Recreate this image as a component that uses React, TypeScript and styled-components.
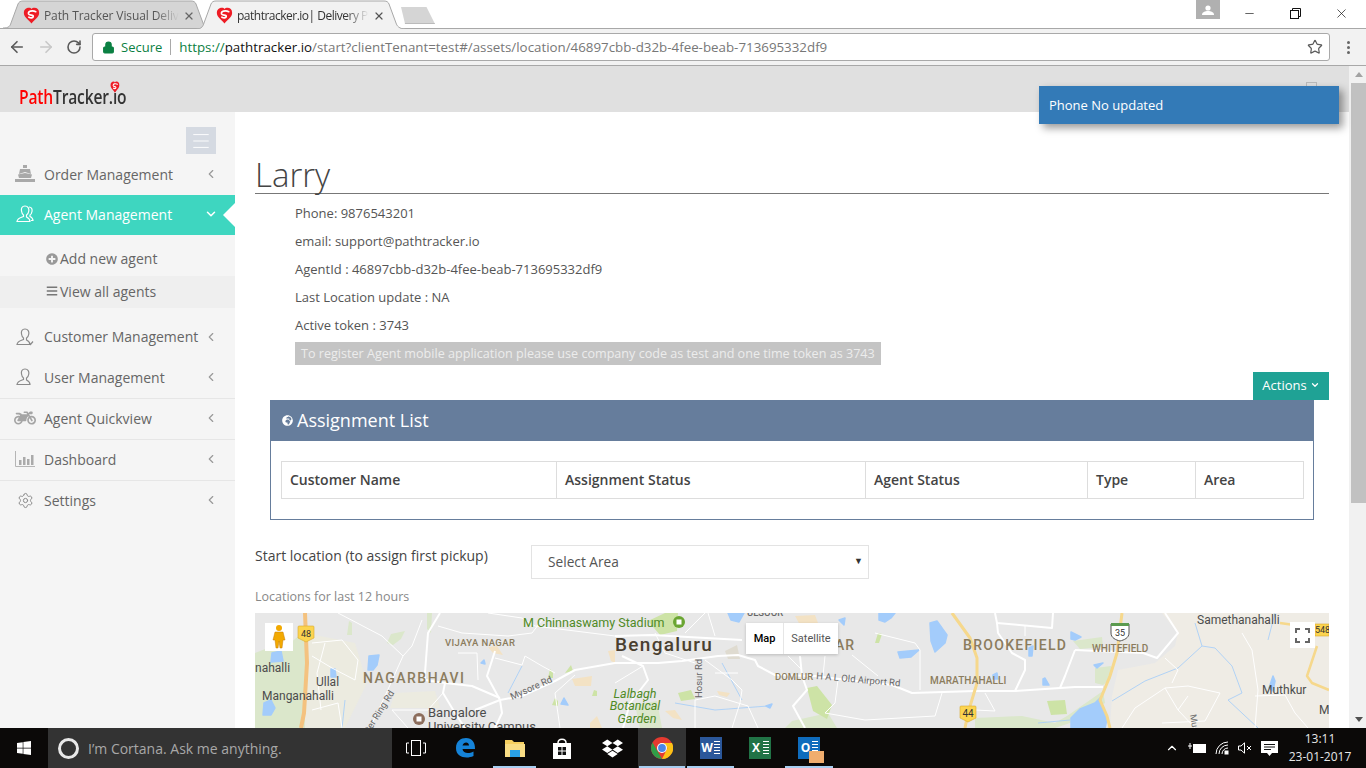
import React from 'react';
import styled, { createGlobalStyle } from 'styled-components';
import { ArrowLeft, ArrowRight, RotateCw, Star, ChevronLeft, ChevronDown, Settings, X, Lock, Menu, Minus } from 'lucide-react';
import { FaWindows, FaDropbox, FaMotorcycle, FaPlusCircle, FaBars, FaGlobeAfrica } from 'react-icons/fa';

const GlobalStyle = createGlobalStyle`
  html, body { margin: 0; padding: 0; overflow: hidden; }
  body { font-family: "Open Sans", "Liberation Sans", sans-serif; color: #555; }
  * { box-sizing: border-box; }
`;

const PathMark = ({ size = 18 }: { size?: number }) => (
  <svg width={size} height={size} viewBox="0 0 20 20">
    <path d="M10 19.5 C7 15 1 12 1 7 C1 3 4 1 7 1 C8.5 1 9.5 1.6 10 2.4 C10.5 1.6 12 1 13.5 1 C16.5 1 19 3 19 7 C19 12 13 15 10 19.5Z" fill="#ee1c25" />
    <path d="M15 5.5 C11 3.5 5.5 5 6.5 8 C7.5 10 13 9 12 11.5 C11.5 13 9 13 7 12" fill="none" stroke="#fff" strokeWidth="2" strokeLinecap="round" />
  </svg>
);

const TabShape = ({ fill, base }: { fill: string; base: number }) => (
  <svg width="210" height="29" viewBox="0 0 210 29">
    <path d={`M0 ${base} C6 ${base} 7 26 8 23 L15 4 C16 2 17 1 20 1 L188 1 C191 1 192 2 193 4 L200 23 C201 26 203 ${base} 210 ${base}`} fill={fill} stroke="#a8a8a8" />
  </svg>
);

const BrowserTabs = () => (
  <TabStrip>
    <Tab>
      <TabBack><TabShape fill="#d5d5d5" base={28} /></TabBack>
      <PathMark size={17} />
      <TabTitle>Path Tracker Visual Delivery</TabTitle>
      <X size={12} strokeWidth={2.4} color="#666" />
    </Tab>
    <Tab $active>
      <TabBack><TabShape fill="#f2f2f2" base={29} /></TabBack>
      <PathMark size={17} />
      <TabTitle $active>pathtracker.io| Delivery Platform</TabTitle>
      <X size={12} strokeWidth={2.4} color="#555" />
    </Tab>
    <NewTab />
    <WindowControls>
      <ProfileBox>
        <svg width="12" height="10" viewBox="0 0 12 10">
          <circle cx="6" cy="3" r="2.6" fill="#fff" />
          <path d="M0 10 C0 7 3 6 6 6 C9 6 12 7 12 10Z" fill="#fff" />
        </svg>
      </ProfileBox>
      <WindowButton><Minus size={13} strokeWidth={1.2} color="#111" /></WindowButton>
      <WindowButton>
        <svg width="11" height="11" viewBox="0 0 11 11" fill="none" stroke="#111">
          <rect x="0.5" y="2.5" width="8" height="8" />
          <path d="M2.5 2.5 V0.5 H10.5 V8.5 H8.5" />
        </svg>
      </WindowButton>
      <WindowButton><X size={15} strokeWidth={1.1} color="#111" /></WindowButton>
    </WindowControls>
  </TabStrip>
);

const BrowserToolbar = () => (
  <Toolbar>
    <NavButtons>
      <ArrowLeft size={18} color="#5a5a5a" strokeWidth={2.2} />
      <ArrowRight size={18} color="#c8c8c8" strokeWidth={2.2} />
      <RotateCw size={16} color="#5a5a5a" strokeWidth={2.4} />
    </NavButtons>
    <Omnibox>
      <Lock size={13} color="#0b8043" fill="#0b8043" strokeWidth={2} />
      <SecureLabel>Secure</SecureLabel>
      <OmniDivider />
      <UrlText>
        <span>https://</span><b>pathtracker.io</b>/start?clientTenant=test#/assets/location/46897cbb-d32b-4fee-beab-713695332df9
      </UrlText>
      <StarSlot><Star size={16} color="#5a5a5a" strokeWidth={1.8} /></StarSlot>
    </Omnibox>
    <MenuDots><i /><i /><i /></MenuDots>
  </Toolbar>
);

const ShipIcon = () => (
  <svg width="20" height="18" viewBox="0 0 20 18" fill="#a9a9a9">
    <rect x="8" y="0" width="4" height="3" />
    <path d="M5 4 H15 L16 9 L10 7 L4 9Z" />
    <path d="M3 9.5 L10 8 L17 9.5 L16 13 H4Z" />
    <rect x="0" y="14" width="20" height="3" />
  </svg>
);

const PersonIcon = ({ color, double, check }: { color: string; double?: boolean; check?: boolean }) => (
  <svg width="18" height="18" viewBox="0 0 18 18" fill="none" stroke={color} strokeWidth="1.2">
    <path d="M9 1 C6 1 5 3.5 5.5 6 C5.8 8 6.5 9.5 7.5 10 V11.5 C5 12.5 1.5 13 1 16.5 H14 C14 14.5 12.5 13 10.5 12 V10 C11.5 9.5 12.5 8 12.8 6 C13.2 3.5 12 1 9 1Z" />
    {double && <path d="M13 2 C15.5 2 16.5 4 16 6.5 C15.7 8 15 9.5 14 10 V11.5 C15.5 12.2 17 13.5 17 15.5 H15" />}
    {check && <path d="M13 14.5 L14.5 16.5 L17 13.5" />}
  </svg>
);

const BarsIcon = () => (
  <svg width="20" height="16" viewBox="0 0 20 16">
    <path d="M0.5 0 V15.5 H20" fill="none" stroke="#b5b5b5" />
    <g fill="#aaa">
      <rect x="4" y="9" width="2.5" height="5" />
      <rect x="8" y="6" width="2.5" height="8" />
      <rect x="12" y="8" width="2.5" height="6" />
      <rect x="16" y="4" width="2.5" height="10" />
    </g>
  </svg>
);

const Sidebar = () => (
  <Side>
    <SideToggle><Menu size={22} color="#fff" strokeWidth={1} /></SideToggle>
    <NavItem>
      <NavIcon><ShipIcon /></NavIcon>
      <NavLabel>Order Management</NavLabel>
      <NavArrow><ChevronLeft size={14} color="#999" /></NavArrow>
    </NavItem>
    <NavItem $active>
      <NavIcon><PersonIcon color="#fff" double /></NavIcon>
      <NavLabel>Agent Management</NavLabel>
      <NavArrow><ChevronDown size={14} color="#fff" strokeWidth={2.6} /></NavArrow>
      <ActiveNotch />
    </NavItem>
    <SubMenu>
      <SubItem><FaPlusCircle size={12} color="#999" />Add new agent</SubItem>
      <SubItem $current><FaBars size={12} color="#777" />View all agents</SubItem>
    </SubMenu>
    <NavItem $tall>
      <NavIcon><PersonIcon color="#8a8a8a" check /></NavIcon>
      <NavLabel>Customer Management</NavLabel>
      <NavArrow><ChevronLeft size={14} color="#999" /></NavArrow>
    </NavItem>
    <NavItem $divider>
      <NavIcon><PersonIcon color="#8a8a8a" /></NavIcon>
      <NavLabel>User Management</NavLabel>
      <NavArrow><ChevronLeft size={14} color="#999" /></NavArrow>
    </NavItem>
    <NavItem $divider>
      <NavIcon><FaMotorcycle size={22} color="#a5a5a5" /></NavIcon>
      <NavLabel>Agent Quickview</NavLabel>
      <NavArrow><ChevronLeft size={14} color="#999" /></NavArrow>
    </NavItem>
    <NavItem $divider>
      <NavIcon><BarsIcon /></NavIcon>
      <NavLabel>Dashboard</NavLabel>
      <NavArrow><ChevronLeft size={14} color="#999" /></NavArrow>
    </NavItem>
    <NavItem>
      <NavIcon><Settings size={17} color="#8a8a8a" strokeWidth={1.4} /></NavIcon>
      <NavLabel>Settings</NavLabel>
      <NavArrow><ChevronLeft size={14} color="#999" /></NavArrow>
    </NavItem>
  </Side>
);

const paleGreen = [
  'M0 40 L18 33 L35 30 L45 22 L50 30 L50 115 L0 115Z',
  'M132 30 L136 21 L150 18 L146 26 L138 32Z',
  'M92 22 L94 8 L97 10 L97 22Z',
  'M172 0 H177 L176 20 L172 16Z',
  'M818 28 L847 24 L848 34 L825 36Z',
  'M840 55 L856 53 L856 66 L848 72 L840 70Z',
  'M720 105 L767 103 L800 110 L812 103 L848 78 L850 90 L815 110 L800 115 H720Z',
  'M537 108 L573 100 L582 115 H530Z',
  'M380 92 L402 88 L407 115 H385Z',
];

const brightGreen = [
  'M393 8 L410 0 L423 0 L422 18 L405 22Z',
  'M423 80 L436 77 L440 86 L426 88Z',
  'M552 75 L562 73 L577 92 L572 106 L558 98Z',
  'M792 88 L810 87 L812 101 L796 102Z',
  'M620 30 L623 20 L627 21 L624 30Z',
  'M293 65 L295 56 L298 60 L298 65Z',
  'M310 60 L316 52 L318 58Z',
  'M297 92 L300 85 L303 88 L303 93Z',
  'M337 83 L339 77 L342 78 L342 83Z',
];

const water = [
  'M114 43 L124 42 L122 52 L118 57 L113 57Z',
  'M17 40 L26 38 L28 48 L16 49Z',
  'M9 90 L16 87 L20 95 L16 102 L8 102Z',
  'M76 56 L80 56 L81 64 L76 64Z',
  'M473 0 H489 L484 9 L476 7Z',
  'M624 0 H640 L636 5 L630 9 L624 7Z',
  'M675 10 L682 8 L692 22 L690 30 L680 39 L676 28Z',
  'M643 39 L664 37 L656 44 L645 45Z',
  'M584 7 L590 5 L589 12Z',
  'M511 93 L517 91 L515 95Z',
  'M306 91 L309 85 L313 92Z',
  'M816 19 L826 24 L820 27 L816 26Z',
  'M774 35 L778 33 L777 43 L774 43Z',
  'M788 66 L790 65 L794 72 L788 72Z',
  'M839 52 L848 50 L842 55Z',
  'M816 105 L825 96 L840 90 L845 85 L852 106 L850 115 H816Z',
  'M1014 75 L1018 63 L1020 68 L1018 78Z',
  'M738 62 L742 60 L743 66 L738 66Z',
  'M226 50 L229 47 L230 51Z',
];

const tan = [
  'M317 66 L337 63 L336 73 L320 73Z',
  'M335 110 L342 103 L347 115 H335Z',
  'M233 34 L242 33 L248 42 L238 40Z',
  'M353 38 L360 37 V50 L356 48Z',
  'M462 78 L475 80 L472 84 L464 82Z',
  'M410 98 L420 97 L427 107 L418 105Z',
  'M540 3 L560 2 L563 10 L545 12Z',
];

const roads = [
  'M220 97 L245 87 L267 83 L300 68 L320 57 L360 50 L403 50 L427 48 L463 43 L483 42 L500 47 L503 53 L520 62 L560 63 L593 67 L637 72 L657 80 L720 78 L760 78 L820 74 L848 74',
  'M185 0 L173 20 L170 60 L170 67 L190 70 L217 73 L245 85',
  'M240 38 L232 63 L245 87 L247 100 L240 115',
  'M190 70 L188 80 L200 100 L210 115',
  'M545 43 L547 63 L552 77 L538 93 L550 115',
  'M360 23 L397 22 L487 27',
  'M367 43 L388 53 L393 67 L375 90 L368 115',
  'M740 0 L742 10 L797 15 L798 0',
  'M742 10 L743 20 L757 40 L770 47 L770 57 L760 78',
  'M820 37 L888 40 L902 45 L923 20 L910 0',
  'M820 37 L810 63 L805 75',
];

const thinRoads = [
  'M83 0 L127 23 L148 43',
  'M167 7 L157 33 L148 43 L130 83 L115 115',
  'M137 97 L173 97 L188 80',
  'M137 97 L153 115',
  'M183 13 L207 20 L253 23 L277 20 L287 7 L333 8',
  'M233 0 L267 5 L280 13 L360 23',
  'M203 40 L222 40 L223 67',
  'M240 45 L267 52 L270 43 L287 53 L300 60',
  'M57 30 L87 27 L103 47 L100 67 L77 55 L57 43',
  'M57 97 L83 90 L87 115',
  'M70 30 L62 60 L66 97',
  'M388 53 L360 70',
  'M450 47 L477 67 L487 77 L485 90 L477 115',
  'M440 87 L440 115',
  'M460 60 L483 60',
  'M440 87 L460 83 L493 93 L503 115',
  'M430 20 L450 0',
  'M453 0 L460 23',
  'M533 43 L547 57',
  'M570 43 L568 63',
  'M597 42 L623 63',
  'M620 20 L660 30 L665 37 L665 77',
  'M583 67 L580 90 L570 100 L610 107 L680 103 L687 80',
  'M770 13 L770 23',
  'M720 97 L740 98 L730 80',
  'M867 115 L880 95 L910 75 L933 73 L965 80 L950 108 L907 110',
  'M910 75 L923 97 L933 83',
  'M923 97 L940 115',
  'M1000 83 L1030 82 L1040 100 L1053 115',
  'M987 20 L997 37 L1003 77 L1000 115',
  'M923 57 L917 70',
  'M910 45 L923 57',
  'M305 115 L300 80 L320 62',
  'M400 20 L410 40 L440 50',
];

const rivers = [
  'M857 88 L890 68 L923 55 L947 33 L960 35 L977 53 L987 80 L973 87 L1003 115',
  'M940 10 L947 33',
  'M1020 0 L1013 27',
  'M467 50 L487 87',
  'M420 90 L460 97 L513 93',
  'M783 110 L815 107',
  'M90 87 L87 115',
  'M267 53 L253 80',
];

const MapDrawing = () => (
  <MapSvg viewBox="0 0 1074 115">
    <defs>
      <filter id="mapSoft"><feGaussianBlur stdDeviation="0.35" /></filter>
    </defs>
    <g filter="url(#mapSoft)">
      <rect width="1074" height="115" fill="#e8e8e8" />
      <path d="M907 0 L923 20 L920 33 L900 50 L863 57 L857 83 L855 115 H1074 V0Z" fill="#efece5" />
      <path d="M50 20 L100 30 L112 70 L90 115 H50Z" fill="#ecebe0" />
      <path d="M470 38 L482 32 L485 46 L473 46Z" fill="#dfdbd0" />
      <path d="M140 80 L180 78 L185 95 L135 95Z" fill="#ecebe0" />
      <g fill="#dbe7cb">{paleGreen.map(d => <path key={d} d={d} />)}</g>
      <g fill="#cde3a6">{brightGreen.map(d => <path key={d} d={d} />)}</g>
      <g fill="#f3e2c4">{tan.map(d => <path key={d} d={d} />)}</g>
      <g fill="#a3ccfb" stroke="#a3ccfb" strokeWidth="1.5" strokeLinejoin="round">{water.map(d => <path key={d} d={d} />)}</g>
      <g fill="none" stroke="#a9cff7" strokeWidth="0.9">{rivers.map(d => <path key={d} d={d} />)}</g>
      <g fill="none" stroke="#fff" strokeWidth="1" strokeLinejoin="round">{thinRoads.map(d => <path key={d} d={d} />)}</g>
      <g fill="none" stroke="#fff" strokeWidth="2" strokeLinejoin="round">{roads.map(d => <path key={d} d={d} />)}</g>
      <g fill="none" strokeLinejoin="round">
        <path d="M50 0 L52 50 L49 100 L46 115" stroke="#f4c27f" strokeWidth="4" />
        <path d="M697 0 L715 25 L722 45 L722 70 L716 90 L713 100 L710 115" stroke="#f6d88c" strokeWidth="3" />
        <path d="M867 0 L862 40 L855 63 L848 80 L845 87 L852 103 L855 115" stroke="#f6d88c" strokeWidth="3" />
        <path d="M1025 10 L1060 15 L1074 15" stroke="#f6d88c" strokeWidth="2.5" />
        <path d="M1062 33 L1052 63 L1057 70 L1074 77" stroke="#f6d88c" strokeWidth="2.5" />
      </g>
    </g>
    <g fill="#fcd44f" stroke="#d9a92e" strokeWidth="0.6">
      <path d="M44 13 H58 Q59 13 59 14 V25 L51 29 L43 25 V14 Q43 13 44 13Z" />
      <path d="M706 93 H720 Q721 93 721 94 V105 L713 109 L705 105 V94 Q705 93 706 93Z" />
      <path d="M1060 11 H1074 V23 H1060Z" />
    </g>
    <path d="M856 11 H874 V20 C874 25 869 27 865 28 C861 27 856 25 856 20Z" fill="#fff" stroke="#555" />
    <rect x="856" y="10" width="18" height="3" fill="#5b9a4f" />
    <circle cx="424" cy="9" r="6" fill="#6aa532" />
    <rect x="421.5" y="6.5" width="5" height="5" fill="#fff" />
    <circle cx="164" cy="106" r="6" fill="#8c6d5c" />
    <rect x="161.5" y="103.5" width="5" height="5" fill="#fff" />
    <MapText x="51" y="24" $size={9} $color="#333" textAnchor="middle">48</MapText>
    <MapText x="713" y="104" $size={10} $color="#333" textAnchor="middle">44</MapText>
    <MapText x="865" y="23" $size={9} $color="#333" textAnchor="middle">35</MapText>
    <MapText x="1060" y="20" $size={9} $color="#333">548</MapText>
    <MapText x="268" y="14" $size={12.5} $color="#4f8a26">M Chinnaswamy Stadium</MapText>
    <MapText x="360" y="38" $size={19} $weight={500} $spacing={1.3} $color="#4a3f30">Bengaluru</MapText>
    <MapText x="190" y="33" $size={9.5} $weight={500} $spacing={0.4} $color="#8b7c5d">VIJAYA NAGAR</MapText>
    <MapText x="108" y="70" $size={14} $weight={500} $spacing={1.5} $color="#8b7c5d">NAGARBHAVI</MapText>
    <MapText x="0" y="59" $size={12} $color="#4c4c4c">nahalli</MapText>
    <MapText x="61" y="73" $size={12} $color="#4c4c4c">Ullal</MapText>
    <MapText x="7" y="87" $size={12} $color="#4c4c4c">Manganahalli</MapText>
    <MapText x="173" y="104" $size={13} $color="#4c4c4c">Bangalore</MapText>
    <MapText x="173" y="118" $size={13} $color="#4c4c4c">University Campus</MapText>
    <MapText x="257" y="87" $size={9.5} $color="#666" transform="rotate(-24 257 87)">Mysore Rd</MapText>
    <MapText x="109" y="129" $size={9.5} $color="#666" transform="rotate(-58 109 129)">Outer Ring Rd</MapText>
    <MapText x="447" y="85" $size={9.5} $color="#666" transform="rotate(-90 447 85)">Hosur Rd</MapText>
    <MapText x="380" y="85" $size={12.5} $italic $color="#4f8a26" textAnchor="middle">Lalbagh</MapText>
    <MapText x="380" y="97" $size={12.5} $italic $color="#4f8a26" textAnchor="middle">Botanical</MapText>
    <MapText x="382" y="110" $size={12.5} $italic $color="#4f8a26" textAnchor="middle">Garden</MapText>
    <MapText x="520" y="67" $size={9.5} $weight={500} $color="#8b7c5d">DOMLUR</MapText>
    <MapText x="561" y="66" $size={9.5} $color="#666" transform="rotate(5 561 66)">H A L Old Airport Rd</MapText>
    <MapText x="675" y="71" $size={10} $weight={500} $spacing={0.1} $color="#8b7c5d">MARATHAHALLI</MapText>
    <MapText x="708" y="37" $size={14} $weight={500} $spacing={1.3} $color="#8b7c5d">BROOKEFIELD</MapText>
    <MapText x="837" y="39" $size={10} $weight={500} $color="#8b7c5d">WHITEFIELD</MapText>
    <MapText x="942" y="11" $size={12} $color="#4c4c4c">Samethanahalli</MapText>
    <MapText x="1007" y="81" $size={12} $color="#4c4c4c">Muthkur</MapText>
    <MapText x="1064" y="101" $size={12} $color="#4c4c4c">M</MapText>
    <MapText x="580" y="37" $size={14} $weight={500} $spacing={1} $color="#8b7c5d">AR</MapText>
    <MapText x="492" y="3" $size={9.5} $weight={500} $color="#666">ULSOOR</MapText>
    <MapText x="935" y="102" $size={9} $color="#666" transform="rotate(80 935 102)">Mu</MapText>
  </MapSvg>
);

const Pegman = () => (
  <svg width="14" height="24" viewBox="0 0 14 24">
    <circle cx="7" cy="3" r="3" fill="#f2a900" />
    <path d="M3 7 H11 L13 15 H11 L10 23 H8 L7 16 L6 23 H4 L3 15 H1Z" fill="#f2a900" stroke="#c97d00" strokeWidth="0.5" />
  </svg>
);

const FullscreenIcon = () => (
  <svg width="15" height="15" viewBox="0 0 15 15" fill="none" stroke="#666" strokeWidth="2">
    <path d="M1 5 V1 H5 M10 1 H14 V5 M14 10 V14 H10 M5 14 H1 V10" />
  </svg>
);

const MainContent = () => (
  <Main>
    <PageTitle>Larry</PageTitle>
    <Details>
      <DetailRow>Phone: 9876543201</DetailRow>
      <DetailRow>email: support@pathtracker.io</DetailRow>
      <DetailRow>AgentId : 46897cbb-d32b-4fee-beab-713695332df9</DetailRow>
      <DetailRow>Last Location update : NA</DetailRow>
      <DetailRow>Active token : 3743</DetailRow>
      <Note>To register Agent mobile application please use company code as test and one time token as 3743</Note>
    </Details>
    <ActionsRow>
      <ActionsButton>Actions<ChevronDown size={10} strokeWidth={3} /></ActionsButton>
    </ActionsRow>
    <Panel>
      <PanelHead><FaGlobeAfrica size={11} color="#fff" />Assignment List</PanelHead>
      <PanelBody>
        <AssignTable>
          <thead>
            <tr>
              <HeadCell $w={275}>Customer Name</HeadCell>
              <HeadCell $w={309}>Assignment Status</HeadCell>
              <HeadCell $w={222}>Agent Status</HeadCell>
              <HeadCell $w={108}>Type</HeadCell>
              <HeadCell $w={108}>Area</HeadCell>
            </tr>
          </thead>
        </AssignTable>
      </PanelBody>
    </Panel>
    <StartRow>
      <StartLabel>Start location (to assign first pickup)</StartLabel>
      <SelectBox>Select Area<SelectArrow>▼</SelectArrow></SelectBox>
    </StartRow>
    <Caption>Locations for last 12 hours</Caption>
    <MapFrame>
      <MapDrawing />
      <PegmanBox><Pegman /></PegmanBox>
      <MapTypes>
        <MapType $active>Map</MapType>
        <MapType>Satellite</MapType>
      </MapTypes>
      <FullscreenBox><FullscreenIcon /></FullscreenBox>
    </MapFrame>
  </Main>
);

const EdgeIcon = () => (
  <svg width="21" height="22" viewBox="0 0 21 22">
    <path d="M1 11 C1 4 6 1 11 1 C17 1 20 5 20 12 H7.5 C8 16 13 17.5 18.5 14.5 V19 C12 22 1 21 1 11Z M7.5 8.5 H14 C14 4.5 8.5 4.5 7.5 8.5Z" fill="#1583d8" fillRule="evenodd" />
  </svg>
);

const FolderIcon = () => (
  <svg width="22" height="20" viewBox="0 0 22 20">
    <path d="M1 2 H8 L10 4 H20 V19 H1Z" fill="#f6cf5f" />
    <rect x="1" y="6" width="20" height="13" fill="#f9dd84" />
    <rect x="6" y="12" width="10" height="7" fill="#2aa2e8" />
  </svg>
);

const StoreIcon = () => (
  <svg width="20" height="23" viewBox="0 0 20 23">
    <path d="M6 6 C6 1 14 1 14 6" fill="none" stroke="#fff" strokeWidth="1.5" />
    <path d="M1 6 H19 V22 H1Z" fill="#fff" />
    <g fill="#111">
      <rect x="6" y="10" width="3.5" height="3.5" />
      <rect x="10.5" y="10" width="3.5" height="3.5" />
      <rect x="6" y="14.5" width="3.5" height="3.5" />
      <rect x="10.5" y="14.5" width="3.5" height="3.5" />
    </g>
  </svg>
);

const ChromeIcon = () => (
  <svg width="22" height="22" viewBox="0 0 22 22">
    <circle cx="11" cy="11" r="11" fill="#e53a30" />
    <path d="M1.5 5.5 L7 15 L11 22 A11 11 0 0 1 1.5 5.5Z" fill="#2f9e48" />
    <path d="M11 22 L16.5 11 L11 6 H21 A11 11 0 0 1 11 22Z" fill="#fbc116" />
    <circle cx="11" cy="11" r="5" fill="#fff" />
    <circle cx="11" cy="11" r="3.9" fill="#4a86e8" />
  </svg>
);

const TaskView = () => (
  <svg width="20" height="16" viewBox="0 0 20 16" fill="none" stroke="#fff">
    <rect x="5.5" y="0.5" width="9" height="15" />
    <path d="M3 3 H0.5 V13 H3 M17 3 H19.5 V13 H17" />
  </svg>
);

const ActionCenter = () => (
  <svg width="17" height="17" viewBox="0 0 17 17">
    <path d="M0 1 H17 V13 H11 L8.5 16 L6 13 H0Z" fill="#fff" />
    <path d="M3 4.5 H14 M3 7 H14 M3 9.5 H10" stroke="#111" />
  </svg>
);

const Taskbar = () => (
  <Bar>
    <StartButton><FaWindows size={16} color="#fff" /></StartButton>
    <Cortana>
      <CortanaRing />
      I’m Cortana. Ask me anything.
    </Cortana>
    <TaskSlot $w={47}><TaskView /></TaskSlot>
    <TaskSlot $w={53}><EdgeIcon /></TaskSlot>
    <TaskSlot $w={45} $open><FolderIcon /></TaskSlot>
    <TaskSlot $w={49}><StoreIcon /></TaskSlot>
    <TaskSlot $w={52}><FaDropbox size={21} color="#fff" /></TaskSlot>
    <TaskSlot $w={48} $open $current><ChromeIcon /></TaskSlot>
    <TaskSlot $w={49} $open><OfficeTile $bg="#2b579a">W</OfficeTile></TaskSlot>
    <TaskSlot $w={49}><OfficeTile $bg="#217346">X</OfficeTile></TaskSlot>
    <TaskSlot $w={50} $open><OfficeTile $bg="#0f6cbd">O<MailFlap /></OfficeTile></TaskSlot>
    <Tray>
      <ChevronDown size={14} color="#fff" style={{ transform: 'rotate(180deg)' }} />
      <svg width="18" height="12" viewBox="0 0 18 12" fill="none" stroke="#fff">
        <rect x="5.5" y="2.5" width="12" height="8" fill="#fff" />
        <path d="M0 4 H4 M2 1 V7" />
      </svg>
      <svg width="14" height="14" viewBox="0 0 14 14" fill="none" stroke="#fff">
        <path d="M1 13 A12 12 0 0 1 13 1 M4 13 A9 9 0 0 1 13 4 M7 13 A6 6 0 0 1 13 7" />
        <rect x="10" y="10" width="3" height="3" fill="#fff" />
      </svg>
      <svg width="14" height="12" viewBox="0 0 14 12" fill="none" stroke="#fff">
        <path d="M0.5 4 H3 L6.5 0.8 V11.2 L3 8 H0.5Z" />
        <path d="M9 4 L13 8 M13 4 L9 8" />
      </svg>
      <ActionCenter />
      <Clock>13:11<br />23-01-2017</Clock>
    </Tray>
  </Bar>
);

const App = () => (
  <>
    <GlobalStyle />
    <Screen>
      <BrowserTabs />
      <BrowserToolbar />
      <PageArea>
        <PageColumn>
          <TopBar>
            <Logo>
              <PathWord>Path</PathWord>Tracker.io
              <LogoMark><PathMark size={12} /></LogoMark>
            </Logo>
          </TopBar>
          <PageBody>
            <Sidebar />
            <MainContent />
          </PageBody>
        </PageColumn>
        <ScrollTrack>
          <ScrollArrow $up />
          <ScrollThumb />
          <ScrollArrow />
        </ScrollTrack>
        <GhostBox />
        <Toast>Phone No updated</Toast>
      </PageArea>
      <Taskbar />
    </Screen>
  </>
);

const Screen = styled.div`
  width: 1366px;
  height: 768px;
  display: flex;
  flex-direction: column;
  overflow: hidden;
  background: #fff;
`;

const TabStrip = styled.div`
  height: 28px;
  display: flex;
  align-items: flex-start;
  padding-left: 3px;
  background: #fff;
  flex: none;
  position: relative;
  z-index: 2;
`;

const Tab = styled.div<{ $active?: boolean }>`
  position: relative;
  width: 210px;
  height: 29px;
  margin-right: -17px;
  display: flex;
  align-items: center;
  padding: 2px ${p => (p.$active ? 21 : 18)}px 0 20px;
  gap: 4px;
  z-index: ${p => (p.$active ? 2 : 1)};
  & > svg { position: relative; flex: none; }
`;

const TabBack = styled.div`
  position: absolute;
  left: 0;
  top: 0;
  height: 29px;
  & > svg { display: block; }
`;

const TabTitle = styled.div<{ $active?: boolean }>`
  position: relative;
  flex: 1;
  min-width: 0;
  white-space: nowrap;
  overflow: hidden;
  font-size: 12px;
  letter-spacing: ${p => (p.$active ? -0.5 : -0.1)}px;
  color: ${p => (p.$active ? '#333' : '#555')};
  -webkit-mask-image: linear-gradient(90deg, #000 82%, transparent 100%);
  mask-image: linear-gradient(90deg, #000 82%, transparent 100%);
`;

const NewTab = styled.div`
  width: 34px;
  height: 17px;
  margin: 7px 0 0 12px;
  background: #d5d5d5;
  border-bottom: 1px solid #bbb;
  clip-path: polygon(0 0, 75% 0, 100% 100%, 12% 100%);
`;

const WindowControls = styled.div`
  margin-left: auto;
  display: flex;
  align-items: flex-start;
  padding-right: 2px;
`;

const ProfileBox = styled.div`
  width: 24px;
  height: 19px;
  background: #b0b0b0;
  display: flex;
  align-items: center;
  justify-content: center;
  margin-right: 6px;
`;

const WindowButton = styled.div`
  width: 46px;
  height: 27px;
  display: flex;
  align-items: center;
  justify-content: center;
`;

const Toolbar = styled.div`
  height: 38px;
  flex: none;
  display: flex;
  align-items: center;
  background: #f2f2f2;
  border-top: 1px solid #a8a8a8;
  border-bottom: 1px solid #a8a8a8;
  position: relative;
`;

const NavButtons = styled.div`
  width: 92px;
  display: flex;
  align-items: center;
  gap: 11px;
  padding-left: 8px;
`;

const Omnibox = styled.div`
  width: 1238px;
  height: 28px;
  background: #fff;
  border: 1px solid #a9a9a9;
  border-radius: 3px;
  display: flex;
  align-items: center;
  padding: 0 6px 0 9px;
`;

const SecureLabel = styled.span`
  margin-left: 6px;
  font-size: 13px;
  color: #0b8043;
`;

const OmniDivider = styled.span`
  width: 1px;
  height: 16px;
  margin: 0 8px;
  background: #a9a9a9;
`;

const UrlText = styled.div`
  font-size: 13.33px;
  color: #777;
  white-space: nowrap;
  span { color: #0b8043; }
  b { color: #111; font-weight: 400; }
`;

const StarSlot = styled.div`
  margin-left: auto;
  display: flex;
`;

const MenuDots = styled.div`
  flex: 1;
  display: flex;
  flex-direction: column;
  align-items: center;
  gap: 2px;
  i { width: 3px; height: 3px; border-radius: 50%; background: #666; }
`;

const PageArea = styled.div`
  flex: 1;
  min-height: 0;
  display: flex;
  position: relative;
`;

const PageColumn = styled.div`
  flex: 1;
  min-width: 0;
  display: flex;
  flex-direction: column;
`;

const TopBar = styled.div`
  height: 46px;
  flex: none;
  background: #e0e0e0;
  display: flex;
  align-items: flex-end;
  padding: 0 0 2px 19px;
`;

const Logo = styled.div`
  position: relative;
  font-size: 19px;
  font-weight: 600;
  line-height: 26px;
  color: #333;
  letter-spacing: -0.2px;
  transform: scaleX(0.82);
  transform-origin: left center;
`;

const PathWord = styled.span`
  color: #f00;
`;

const LogoMark = styled.span`
  position: absolute;
  right: 8px;
  top: -3px;
  display: flex;
`;

const PageBody = styled.div`
  flex: 1;
  min-height: 0;
  display: flex;
`;

const Side = styled.nav`
  width: 235px;
  flex: none;
  background: #f5f5f5;
`;

const SideToggle = styled.div`
  width: 30px;
  height: 27px;
  margin: 15px 0 1px 186px;
  background: #d5dae2;
  display: flex;
  align-items: center;
  justify-content: center;
`;

const NavItem = styled.div<{ $active?: boolean; $divider?: boolean; $tall?: boolean }>`
  position: relative;
  height: ${p => (p.$divider || p.$tall ? 41 : 40)}px;
  display: flex;
  align-items: center;
  padding: 0 17px 2px 14px;
  background: ${p => (p.$active ? '#3ed6c0' : 'transparent')};
  color: ${p => (p.$active ? '#fff' : '#666')};
  border-bottom: ${p => (p.$divider ? '1px solid #e6e6e6' : 'none')};
`;

const NavIcon = styled.div`
  width: 22px;
  height: 20px;
  margin-right: 8px;
  display: flex;
  align-items: center;
  justify-content: center;
`;

const NavLabel = styled.div`
  flex: 1;
  font-size: 14px;
  white-space: nowrap;
`;

const NavArrow = styled.div`
  width: 14px;
  display: flex;
`;

const ActiveNotch = styled.span`
  position: absolute;
  right: 0;
  top: 8px;
  border-top: 12px solid transparent;
  border-bottom: 12px solid transparent;
  border-right: 12px solid #fff;
`;

const SubMenu = styled.div`
  padding: 8px 0 9px;
`;

const SubItem = styled.div<{ $current?: boolean }>`
  height: ${p => (p.$current ? 32 : 33)}px;
  display: flex;
  align-items: center;
  gap: 2px;
  padding: 0 0 2px 46px;
  font-size: 14px;
  color: #666;
  background: ${p => (p.$current ? '#efefef' : 'transparent')};
`;

const Main = styled.main`
  flex: 1;
  min-width: 0;
  padding: 0 20px;
  background: #fff;
  overflow: hidden;
`;

const PageTitle = styled.h1`
  margin: 45px 0 0;
  height: 37px;
  line-height: 36px;
  font-size: 33px;
  font-weight: 300;
  color: #444;
  border-bottom: 1px solid #777;
`;

const Details = styled.div`
  padding: 5px 0 0 40px;
`;

const DetailRow = styled.div`
  height: 28px;
  line-height: 28px;
  font-size: 13px;
  color: #555;
`;

const Note = styled.div`
  display: inline-block;
  margin-top: 3px;
  height: 23px;
  line-height: 23px;
  padding: 0 6px;
  font-size: 12.6px;
  color: #ececec;
  background: #c4c4c4;
  vertical-align: top;
`;

const ActionsRow = styled.div`
  display: flex;
  justify-content: flex-end;
  margin-top: 7px;
`;

const ActionsButton = styled.div`
  width: 76px;
  height: 28px;
  display: flex;
  align-items: center;
  justify-content: center;
  gap: 3px;
  padding-bottom: 2px;
  background: #1fa295;
  color: #fff;
  font-size: 13px;
`;

const Panel = styled.section`
  margin: 0 15px;
  height: 120px;
  border: 1px solid #667d9c;
`;

const PanelHead = styled.div`
  height: 40px;
  display: flex;
  align-items: center;
  gap: 4px;
  padding: 0 0 2px 11px;
  background: #667d9c;
  color: #fff;
  font-size: 18px;
`;

const PanelBody = styled.div`
  padding: 20px 12px 20px 10px;
`;

const AssignTable = styled.table`
  width: 100%;
  border-collapse: collapse;
  table-layout: fixed;
`;

const HeadCell = styled.th<{ $w: number }>`
  width: ${p => p.$w}px;
  height: 37px;
  padding: 0 8px 1px;
  border: 1px solid #ddd;
  text-align: left;
  font-size: 14px;
  font-weight: 600;
  color: #444;
`;

const StartRow = styled.div`
  display: flex;
  align-items: flex-start;
  margin-top: 25px;
`;

const StartLabel = styled.div`
  width: 276px;
  line-height: 22px;
  font-size: 14px;
  color: #444;
`;

const SelectBox = styled.div`
  position: relative;
  width: 338px;
  height: 34px;
  line-height: 32px;
  padding-left: 16px;
  border: 1px solid #e3e3e3;
  font-size: 13.7px;
  color: #555;
`;

const SelectArrow = styled.span`
  position: absolute;
  right: 5px;
  top: -1px;
  font-size: 9px;
  color: #333;
`;

const Caption = styled.div`
  margin-top: 9px;
  height: 17px;
  line-height: 17px;
  font-size: 12.5px;
  color: #888;
`;

const MapFrame = styled.div`
  position: relative;
  margin-top: 8px;
  height: 115px;
  overflow: hidden;
`;

const MapSvg = styled.svg`
  display: block;
  width: 1074px;
  height: 115px;
`;

const MapText = styled.text<{ $size: number; $color: string; $weight?: number; $spacing?: number; $italic?: boolean }>`
  font-family: Roboto, "Liberation Sans", sans-serif;
  font-size: ${p => p.$size}px;
  font-weight: ${p => p.$weight ?? 400};
  font-style: ${p => (p.$italic ? 'italic' : 'normal')};
  letter-spacing: ${p => p.$spacing ?? 0}px;
  fill: ${p => p.$color};
`;

const PegmanBox = styled.div`
  position: absolute;
  left: 10px;
  top: 10px;
  width: 28px;
  height: 28px;
  background: #fff;
  display: flex;
  align-items: center;
  justify-content: center;
`;

const MapTypes = styled.div`
  position: absolute;
  left: 491px;
  top: 10px;
  height: 31px;
  display: flex;
  background: #fff;
  box-shadow: 0 1px 3px rgba(0, 0, 0, 0.2);
  font-family: Roboto, "Liberation Sans", sans-serif;
  font-size: 11px;
`;

const MapType = styled.div<{ $active?: boolean }>`
  width: ${p => (p.$active ? 38 : 54)}px;
  display: flex;
  align-items: center;
  justify-content: center;
  color: ${p => (p.$active ? '#000' : '#555')};
  font-weight: ${p => (p.$active ? 500 : 400)};
  border-right: ${p => (p.$active ? '1px solid #e6e6e6' : 'none')};
`;

const FullscreenBox = styled.div`
  position: absolute;
  left: 1035px;
  top: 9px;
  width: 25px;
  height: 26px;
  background: #fff;
  display: flex;
  align-items: center;
  justify-content: center;
`;

const ScrollTrack = styled.div`
  width: 17px;
  flex: none;
  background: #f1f1f1;
  padding-left: 2px;
  display: flex;
  flex-direction: column;
  align-items: center;
`;

const ScrollThumb = styled.div`
  width: 100%;
  height: 420px;
  background: #c1c1c1;
  flex: none;
  margin-bottom: auto;
`;

const ScrollArrow = styled.div<{ $up?: boolean }>`
  flex: none;
  width: 0;
  height: 5px;
  margin: 6px 0;
  border-left: 4px solid transparent;
  border-right: 4px solid transparent;
  ${p => (p.$up ? 'border-bottom: 5px solid #a3a3a3;' : 'border-top: 5px solid #505050;')}
`;

const GhostBox = styled.div`
  position: absolute;
  left: 1306px;
  top: 16px;
  width: 11px;
  height: 6px;
  border: 1px solid #bbb;
  border-bottom: 0;
`;

const Toast = styled.div`
  position: absolute;
  left: 1039px;
  top: 20px;
  width: 300px;
  height: 38px;
  line-height: 38px;
  padding-left: 10px;
  background: #337ab7;
  color: #fff;
  font-size: 13px;
  box-shadow: 4px 4px 8px rgba(0, 0, 0, 0.4);
`;

const Bar = styled.footer`
  height: 40px;
  flex: none;
  display: flex;
  background: #0b0908;
  color: #fff;
`;

const StartButton = styled.div`
  width: 48px;
  display: flex;
  align-items: center;
  justify-content: center;
`;

const Cortana = styled.div`
  width: 344px;
  display: flex;
  align-items: center;
  gap: 9px;
  padding-left: 10px;
  background: #333;
  color: #a8a8a8;
  font-size: 14px;
`;

const CortanaRing = styled.span`
  width: 21px;
  height: 21px;
  border: 3px solid #e8e8e8;
  border-radius: 50%;
`;

const TaskSlot = styled.div<{ $w: number; $open?: boolean; $current?: boolean }>`
  position: relative;
  width: ${p => p.$w}px;
  display: flex;
  align-items: center;
  justify-content: center;
  background: ${p => (p.$current ? '#333' : 'transparent')};
  &::after {
    content: '';
    display: ${p => (p.$open ? 'block' : 'none')};
    position: absolute;
    left: 1px;
    right: 1px;
    bottom: 0;
    height: 2px;
    background: #a6cdf0;
  }
`;

const OfficeTile = styled.div<{ $bg: string }>`
  position: relative;
  width: 22px;
  height: 22px;
  padding-right: 7px;
  background: ${p => p.$bg};
  color: #fff;
  font-size: 12px;
  font-weight: 700;
  line-height: 22px;
  text-align: center;
  &::after {
    content: '';
    position: absolute;
    right: 2px;
    top: 4px;
    bottom: 4px;
    width: 6px;
    background: repeating-linear-gradient(180deg, #fff 0 1px, transparent 1px 3px);
  }
`;

const MailFlap = styled.span`
  position: absolute;
  right: -4px;
  bottom: -4px;
  width: 15px;
  height: 12px;
  background: #f0ad6e;
  z-index: 1;
`;

const Tray = styled.div`
  margin-left: auto;
  display: flex;
  align-items: center;
  gap: 9px;
  padding-right: 13px;
`;

const Clock = styled.div`
  width: 66px;
  text-align: center;
  white-space: nowrap;
  font-size: 12px;
  line-height: 18px;
  color: #e8e8e8;
`;

export default App;
